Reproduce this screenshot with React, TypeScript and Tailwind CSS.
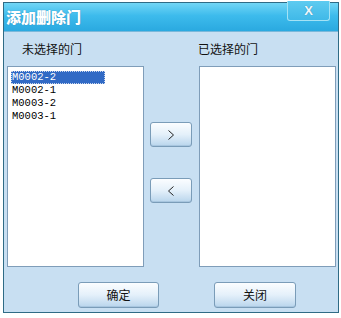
import React from "react";

const cjk = { fontFamily: '"Noto Sans CJK SC", "Noto Sans", sans-serif' };

const leftItems = ["M0002-2", "M0002-1", "M0003-2", "M0003-1"];

function XpButton({
  children,
  className,
}: {
  children: React.ReactNode;
  className: string;
}) {
  return (
    <button
      className={`flex items-center justify-center rounded-[3px] border border-[#7a9cb8] bg-gradient-to-b from-[#fbfdff] via-[#e4f0fa] to-[#b9d5ec] text-[12px] text-[#111] shadow-[inset_0_-1px_0_#a8c6df] ${className}`}
      style={cjk}
    >
      {children}
    </button>
  );
}

function Chevron({ left }: { left?: boolean }) {
  return (
    <svg width="6" height="10" viewBox="0 0 6 10" fill="none" stroke="#222" strokeWidth="1">
      {left ? <polyline points="5.5 0.5 0.5 5 5.5 9.5" /> : <polyline points="0.5 0.5 5.5 5 0.5 9.5" />}
    </svg>
  );
}

export default function App() {
  return (
    <div className="w-[341px] h-[318px] bg-white overflow-hidden">
      <div className="ml-[3px] mt-[2px] w-[336px] h-[311px] flex flex-col border border-[#2f6b86] bg-[#c8dff2]">
        {/* title bar */}
        <div className="relative h-[29px] shrink-0 bg-[linear-gradient(to_bottom,#72d6f6,#3dbbec_45%,#2aa9e0)] border-b border-[#7ab8da]">
          <span
            className="absolute left-[2px] top-[6px] text-[15px] font-black leading-none text-white [text-shadow:0_0_1px_#2b86b5]"
            style={cjk}
          >
            添加删除门
          </span>
          <div className="absolute right-[8px] -top-[2px] w-[43px] h-[20px] rounded-b-[3px] border border-[#a4e2f5] border-t-0 bg-[linear-gradient(to_bottom,#5ecbf0,#40b9e8)] flex items-center justify-center">
            <span
              className="text-[13px] font-bold leading-none text-[#eef8fc] [text-shadow:0_0_1px_#2a7fa8]"
              style={{ fontFamily: '"Liberation Sans", Arial, sans-serif' }}
            >
              X
            </span>
          </div>
        </div>

        {/* labels */}
        <div className="flex h-[34px] items-center text-[12px] text-[#111]" style={cjk}>
          <span className="ml-[18px] w-[176px]">未选择的门</span>
          <span>已选择的门</span>
        </div>

        {/* lists */}
        <div className="flex ml-[3px]">
          <div className="w-[137px] h-[201px] border border-[#7f9db9] bg-white pt-[4px] pl-[3px]">
            {leftItems.map((it, i) => (
              <div
                key={it}
                className={`h-[13px] w-[94px] pl-[1px] text-[10.5px] leading-[13px] ${
                  i === 0
                    ? "bg-[#316ac5] text-white outline outline-1 outline-dotted outline-[#c9d6ec] -outline-offset-1"
                    : "text-black"
                }`}
                style={{ fontFamily: '"Liberation Mono", "Courier New", monospace' }}
              >
                {it}
              </div>
            ))}
          </div>
          <div className="w-[55px] flex flex-col pl-[6px]">
            <XpButton className="mt-[56px] w-[42px] h-[25px]">
              <Chevron />
            </XpButton>
            <XpButton className="mt-[31px] w-[42px] h-[25px]">
              <Chevron left />
            </XpButton>
          </div>
          <div className="w-[137px] h-[201px] border border-[#7f9db9] bg-white" />
        </div>

        {/* bottom buttons */}
        <div className="flex mt-[15px]">
          <XpButton className="ml-[74px] w-[81px] h-[26px]">确定</XpButton>
          <XpButton className="ml-[55px] w-[82px] h-[26px]">关闭</XpButton>
        </div>
      </div>
    </div>
  );
}
